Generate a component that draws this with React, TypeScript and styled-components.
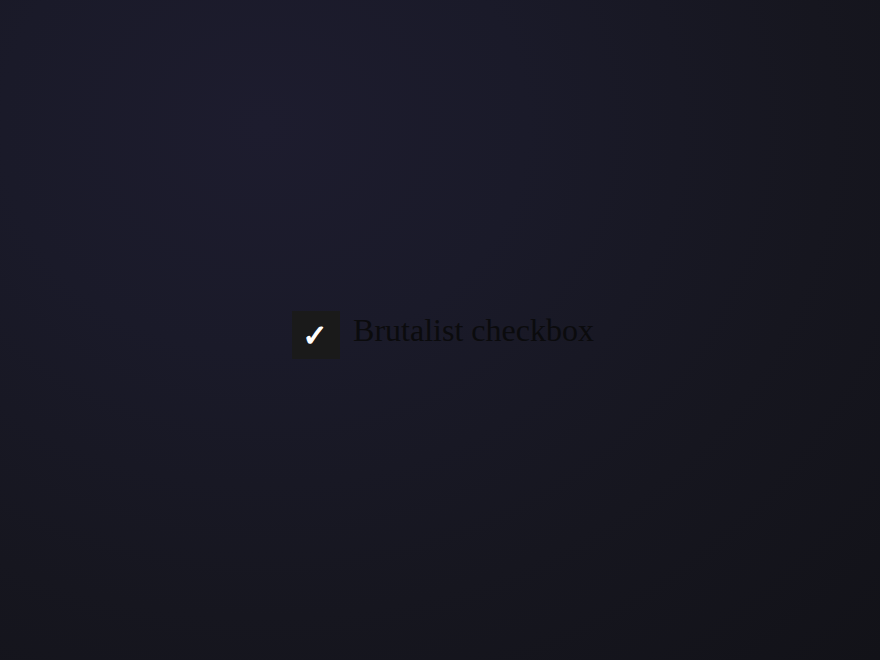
import React, {useState} from "react";
import styled, {createGlobalStyle} from "styled-components";

const GlobalStyle = createGlobalStyle`
  html, body {
    margin: 0;
    padding: 0;
    height: 100%;
  }

  body {
    font-family: "Liberation Serif", "Times New Roman", serif;
  }
`

export default function App() {
    const [checked, setChecked] = useState(true);

    return (
        <>
            <GlobalStyle/>
            <Page>
                <Label onClick={() => setChecked(!checked)}>
                    <Box role="checkbox" aria-checked={checked}>
                        {checked ? <Tick>✓</Tick> : null}
                    </Box>
                    <LabelText>Brutalist checkbox</LabelText>
                </Label>
            </Page>
        </>
    );
}

const Page = styled.div`
  box-sizing: border-box;
  min-height: 100vh;
  display: flex;
  align-items: center;
  justify-content: center;
  padding-left: 6px;
  background: radial-gradient(ellipse farthest-corner at 30% 19%, #1d1c2e 0%, #1a1a29 30%, #16161f 65%, #121218 100%);
`

const Label = styled.label`
  display: flex;
  align-items: center;
  gap: 13px;
  cursor: pointer;
  user-select: none;
`

const Box = styled.span`
  width: 48px;
  height: 48px;
  margin-top: 10px;
  display: flex;
  align-items: center;
  justify-content: center;
  background: #1a1a1a;
`

const Tick = styled.span`
  color: #ffffff;
  font-family: "DejaVu Sans", sans-serif;
  font-size: 30px;
  font-weight: bold;
  line-height: 1;
  margin-top: 2px;
  margin-left: -2px;
  -webkit-text-stroke: 1.2px #ffffff;
`

const LabelText = styled.span`
  font-size: 32px;
  color: #0b0b0d;
`
